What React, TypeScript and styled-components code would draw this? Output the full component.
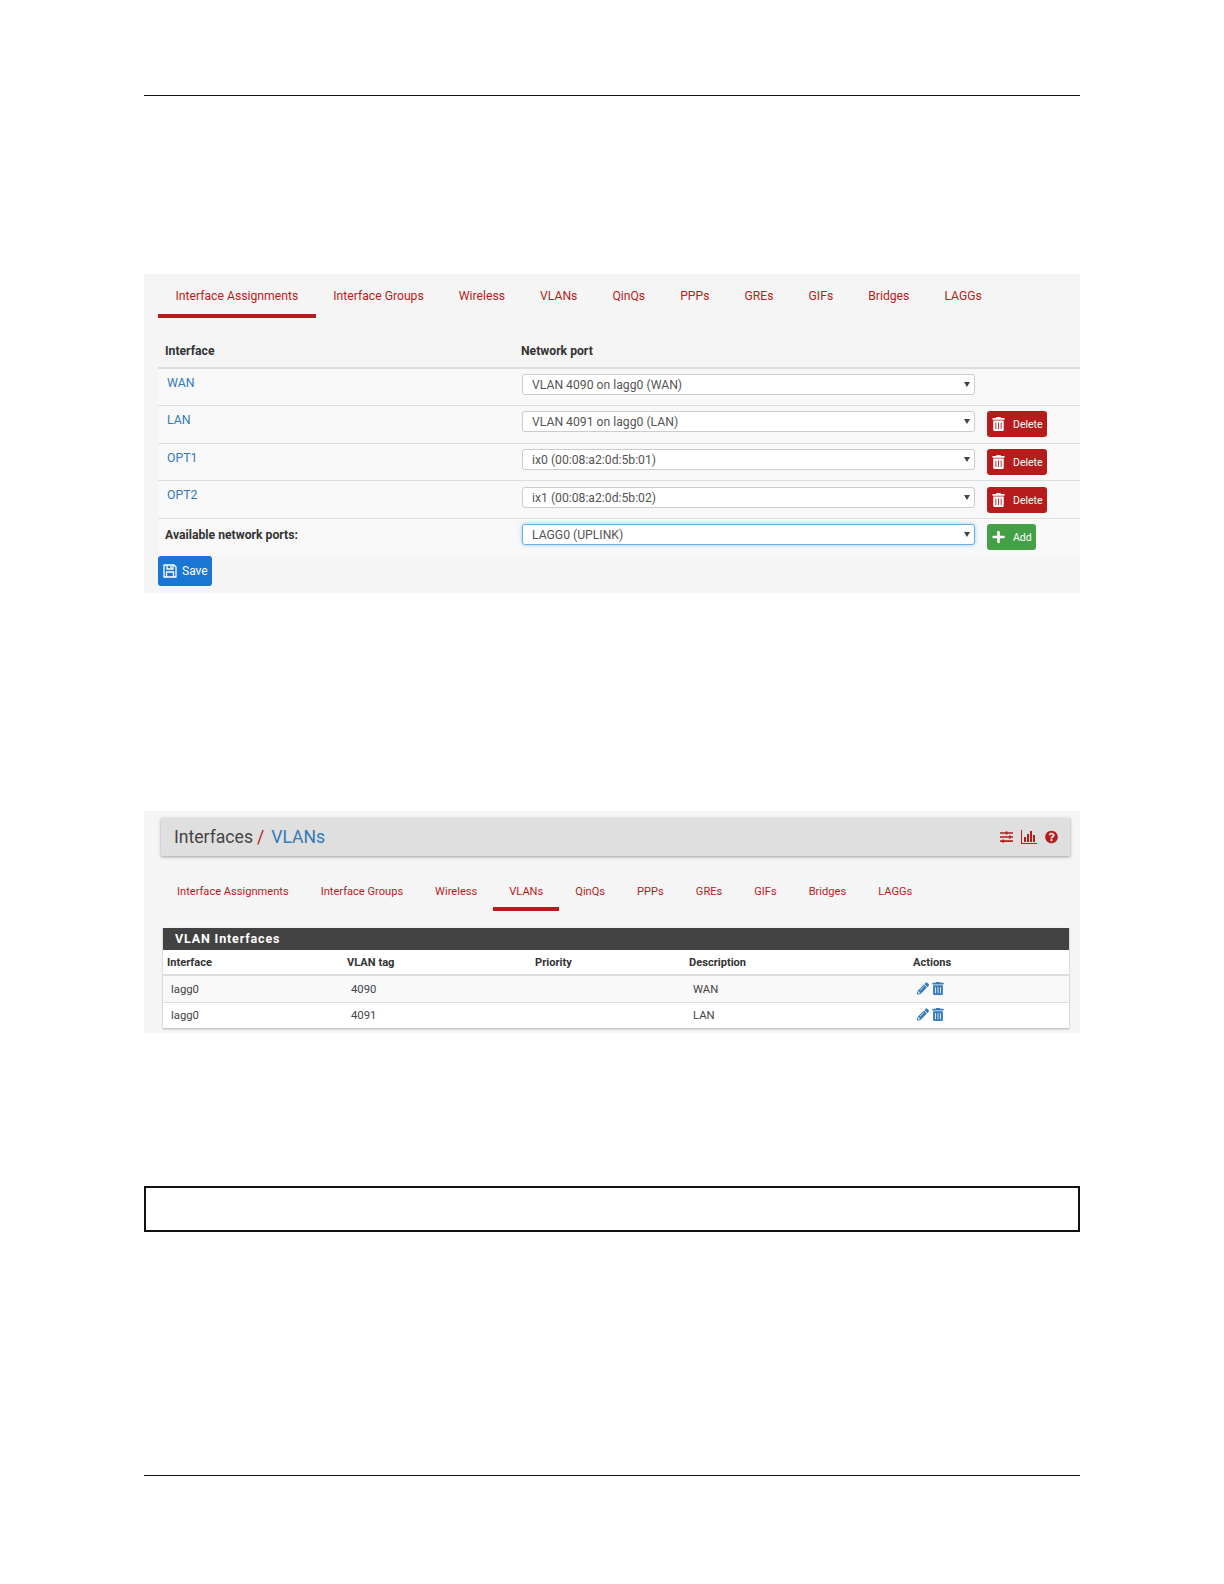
import React from "react";
import styled, { createGlobalStyle } from "styled-components";
import {
  FaPencilAlt,
  FaPlus,
  FaQuestionCircle,
  FaSlidersH,
  FaTrashAlt,
} from "react-icons/fa";

const Global = createGlobalStyle`
  html, body { margin: 0; padding: 0; background: #fff; }
  body { font-family: Roboto, "Liberation Sans", sans-serif; color: #333; }
  * { box-sizing: border-box; }
`;

const Page = styled.div`
  width: 1224px;
  height: 1584px;
  padding: 95px 144px 0 144px;
  display: flex;
  flex-direction: column;
`;

const Rule = styled.div<{ $gap?: number }>`
  height: 1px;
  background: #111;
  margin-top: ${(p) => p.$gap ?? 0}px;
`;

const Shot = styled.section<{ $gap: number; $height: number }>`
  margin-top: ${(p) => p.$gap}px;
  height: ${(p) => p.$height}px;
  background: #f5f5f5;
  overflow: hidden;
`;

const Tabs = styled.nav<{
  $inset: number;
  $size: number;
  $height: number;
  $pad: number;
  $above: number;
  $textDrop: number;
}>`
  display: flex;
  margin: ${(p) => p.$above}px 0 0 ${(p) => p.$inset}px;
  height: ${(p) => p.$height}px;
  font-size: ${(p) => p.$size}px;
  & > a { padding: ${(p) => p.$textDrop}px ${(p) => p.$pad}px 0; }
`;

const Tab = styled.a<{ $active?: boolean }>`
  display: flex;
  align-items: center;
  color: #b71c1c;
  white-space: nowrap;
  border-bottom: 4px solid ${(p) => (p.$active ? "#b71c1c" : "transparent")};
`;

const AssignGrid = styled.div`
  margin-left: 14px;
`;

const AssignRow = styled.div<{ $head?: boolean; $height: number }>`
  display: grid;
  grid-template-columns: 364px 453px 1fr;
  height: ${(p) => p.$height}px;
  background: ${(p) => (p.$head ? "transparent" : "#f8f8f8")};
  border-bottom: ${(p) => (p.$head ? "2px solid #ddd" : "1px solid #ddd")};
  &:last-child { border-bottom: 0; }
`;

const HeadCell = styled.div<{ $nudge?: number }>`
  padding: 26px 0 0 7px;
  margin-left: ${(p) => p.$nudge ?? 0}px;
  font-size: 12.2px;
  font-weight: 700;
  line-height: 15px;
  color: #333;
`;

const IfLink = styled.a`
  padding: 7px 0 0 9px;
  font-size: 12.3px;
  line-height: 15px;
  color: #337ab7;
`;

const BoldCell = styled.div`
  padding: 9px 0 0 7px;
  font-size: 12.2px;
  font-weight: 700;
  line-height: 15px;
  color: #333;
`;

const SelectBox = styled.div<{ $top: number }>`
  position: relative;
  height: 21px;
  margin-top: ${(p) => p.$top}px;
  &::after {
    content: "";
    position: absolute;
    right: 5px;
    top: 8px;
    border-left: 3px solid transparent;
    border-right: 3px solid transparent;
    border-top: 5px solid #444;
    pointer-events: none;
  }
`;

const Select = styled.select<{ $focus?: boolean }>`
  appearance: none;
  display: block;
  width: 100%;
  height: 21px;
  padding: 0 0 0 9px;
  background: #fff;
  border: 1px solid ${(p) => (p.$focus ? "#66afe9" : "#ccc")};
  border-radius: 3px;
  box-shadow: ${(p) => (p.$focus ? "0 0 4px rgba(102,175,233,.6)" : "none")};
  font: 12.2px Roboto, sans-serif;
  color: #555;
`;

const ActionCell = styled.div<{ $top: number }>`
  padding: ${(p) => p.$top}px 0 0 12px;
`;

const Button = styled.button<{ $color: string }>`
  display: inline-flex;
  align-items: center;
  height: 26px;
  padding: 0 4px 0 5px;
  background: ${(p) => p.$color};
  color: #fff;
  border: 0;
  border-radius: 3px;
  font: 10.5px Roboto, sans-serif;
  & > svg { width: 13px; height: 14px; margin-right: 8px; }
`;

const SaveRow = styled.div`
  margin: 0 0 0 14px;
`;

const SaveButton = styled.button`
  display: inline-flex;
  align-items: center;
  gap: 5px;
  width: 54px;
  height: 30px;
  padding: 0 0 0 5px;
  background: #1976d2;
  color: #fff;
  border: 0;
  border-radius: 3px;
  font: 12px Roboto, sans-serif;
  & > svg { width: 14px; height: 14px; }
`;

const TitleBar = styled.header`
  display: flex;
  align-items: center;
  justify-content: space-between;
  margin: 7px 10px 0 17px;
  height: 38px;
  padding: 0 12px 0 13px;
  background: #dfdfdf;
  box-shadow: 0 1px 3px rgba(0, 0, 0, 0.35);
`;

const Crumbs = styled.h1`
  margin: 0;
  font-size: 17.6px;
  font-weight: 400;
  color: #444;
  display: flex;
  gap: 4px;
`;

const CrumbSep = styled.span`
  color: #b71c1c;
  margin-right: 3px;
`;

const CrumbLink = styled.span`
  color: #337ab7;
`;

const TitleIcons = styled.div`
  display: flex;
  align-items: center;
  gap: 8px;
  color: #b71c1c;
  & > svg { height: 14px; width: 13px; }
  & > svg.chart { width: 16px; }
`;

const Panel = styled.div`
  margin: 17px 11px 0 19px;
  background: #fff;
  box-shadow: 0 1px 2px rgba(0, 0, 0, 0.3);
`;

const PanelHead = styled.h2`
  margin: 0;
  height: 22px;
  padding-left: 12px;
  background: #424242;
  color: #fff;
  font-size: 12.5px;
  font-weight: 700;
  letter-spacing: 0.85px;
  line-height: 22px;
`;

const VlanRow = styled.div<{ $kind: "head" | "odd" | "even"; $height: number }>`
  display: grid;
  grid-template-columns: 180px 188px 154px 224px 1fr;
  align-items: center;
  height: ${(p) => p.$height}px;
  padding-left: ${(p) => (p.$kind === "head" ? 4 : 8)}px;
  font-size: ${(p) => (p.$kind === "head" ? 11.1 : 11.3)}px;
  font-weight: ${(p) => (p.$kind === "head" ? 700 : 400)};
  color: ${(p) => (p.$kind === "head" ? "#333" : "#444")};
  background: ${(p) => (p.$kind === "odd" ? "#f9f9f9" : "#fff")};
  border-bottom: ${(p) =>
    p.$kind === "head" ? "2px solid #ddd" : p.$kind === "odd" ? "1px solid #ddd" : "0"};
`;

const RowIcons = styled.div`
  display: flex;
  align-items: center;
  gap: 3px;
  margin-top: -2px;
  color: #337ab7;
  & > svg { width: 12px; height: 13px; }
`;

const NoteBox = styled.div`
  margin-top: 153px;
  height: 46px;
  border: 2px solid #111;
`;

const SaveIcon = () => (
  <svg viewBox="0 0 14 14" fill="none" stroke="currentColor" strokeWidth="1.3">
    <path d="M1 1h10l2 2v10H1z" strokeLinejoin="round" />
    <path d="M4 1v4h6V1" />
    <path d="M3.5 13V8h7v5" />
    <path d="M8 2v2" />
  </svg>
);

const ChartIcon = () => (
  <svg className="chart" viewBox="0 0 16 14" fill="currentColor">
    <path d="M0 0h1v13h15v1H0z" />
    <rect x="3" y="7" width="2" height="5" />
    <rect x="6" y="4" width="2" height="8" />
    <rect x="9" y="1" width="2" height="11" />
    <rect x="12" y="5" width="2" height="7" />
  </svg>
);

const tabs = [
  "Interface Assignments",
  "Interface Groups",
  "Wireless",
  "VLANs",
  "QinQs",
  "PPPs",
  "GREs",
  "GIFs",
  "Bridges",
  "LAGGs",
];

const ports = [
  { name: "WAN", value: "VLAN 4090 on lagg0 (WAN)", del: false, h: 37, top: 5 },
  { name: "LAN", value: "VLAN 4091 on lagg0 (LAN)", del: true, h: 38, top: 5 },
  { name: "OPT1", value: "ix0 (00:08:a2:0d:5b:01)", del: true, h: 37, top: 5 },
  { name: "OPT2", value: "ix1 (00:08:a2:0d:5b:02)", del: true, h: 38, top: 6 },
];

const vlans = [
  { tag: "4090", desc: "WAN", kind: "odd" as const, h: 27 },
  { tag: "4091", desc: "LAN", kind: "even" as const, h: 25 },
];

export default function App() {
  return (
    <Page>
      <Global />
      <Rule />
      <Shot $gap={178} $height={319}>
        <Tabs $inset={14} $size={12.2} $height={44} $pad={17.5} $above={0} $textDrop={3}>
          {tabs.map((t, i) => (
            <Tab key={t} $active={i === 0}>{t}</Tab>
          ))}
        </Tabs>
        <AssignGrid>
          <AssignRow $head $height={51}>
            <HeadCell>Interface</HeadCell>
            <HeadCell $nudge={-8}>Network port</HeadCell>
          </AssignRow>
          {ports.map((p) => (
            <AssignRow key={p.name} $height={p.h}>
              <IfLink>{p.name}</IfLink>
              <SelectBox $top={p.top}>
                <Select defaultValue={p.value}>
                  <option>{p.value}</option>
                </Select>
              </SelectBox>
              <ActionCell $top={p.top}>
                {p.del && (
                  <Button $color="#b71c1c">
                    <FaTrashAlt />
                    Delete
                  </Button>
                )}
              </ActionCell>
            </AssignRow>
          ))}
          <AssignRow $height={37}>
            <BoldCell>Available network ports:</BoldCell>
            <SelectBox $top={5}>
              <Select $focus defaultValue="LAGG0 (UPLINK)">
                <option>LAGG0 (UPLINK)</option>
              </Select>
            </SelectBox>
            <ActionCell $top={5}>
              <Button $color="#43a047">
                <FaPlus />
                Add
              </Button>
            </ActionCell>
          </AssignRow>
        </AssignGrid>
        <SaveRow>
          <SaveButton>
            <SaveIcon />
            Save
          </SaveButton>
        </SaveRow>
      </Shot>

      <Shot $gap={218} $height={222}>
        <TitleBar>
          <Crumbs>
            Interfaces <CrumbSep>/</CrumbSep> <CrumbLink>VLANs</CrumbLink>
          </Crumbs>
          <TitleIcons>
            <FaSlidersH />
            <ChartIcon />
            <FaQuestionCircle />
          </TitleIcons>
        </TitleBar>
        <Tabs $inset={17} $size={11.1} $height={37} $pad={16} $above={18} $textDrop={2}>
          {tabs.map((t) => (
            <Tab key={t} $active={t === "VLANs"}>{t}</Tab>
          ))}
        </Tabs>
        <Panel>
          <PanelHead>VLAN Interfaces</PanelHead>
          <VlanRow $kind="head" $height={26}>
            <span>Interface</span>
            <span>VLAN tag</span>
            <span>Priority</span>
            <span>Description</span>
            <span>Actions</span>
          </VlanRow>
          {vlans.map((v) => (
            <VlanRow key={v.tag} $kind={v.kind} $height={v.h}>
              <span>lagg0</span>
              <span>{v.tag}</span>
              <span />
              <span>{v.desc}</span>
              <RowIcons>
                <FaPencilAlt />
                <FaTrashAlt />
              </RowIcons>
            </VlanRow>
          ))}
        </Panel>
      </Shot>

      <NoteBox />
      <Rule $gap={243} />
    </Page>
  );
}
